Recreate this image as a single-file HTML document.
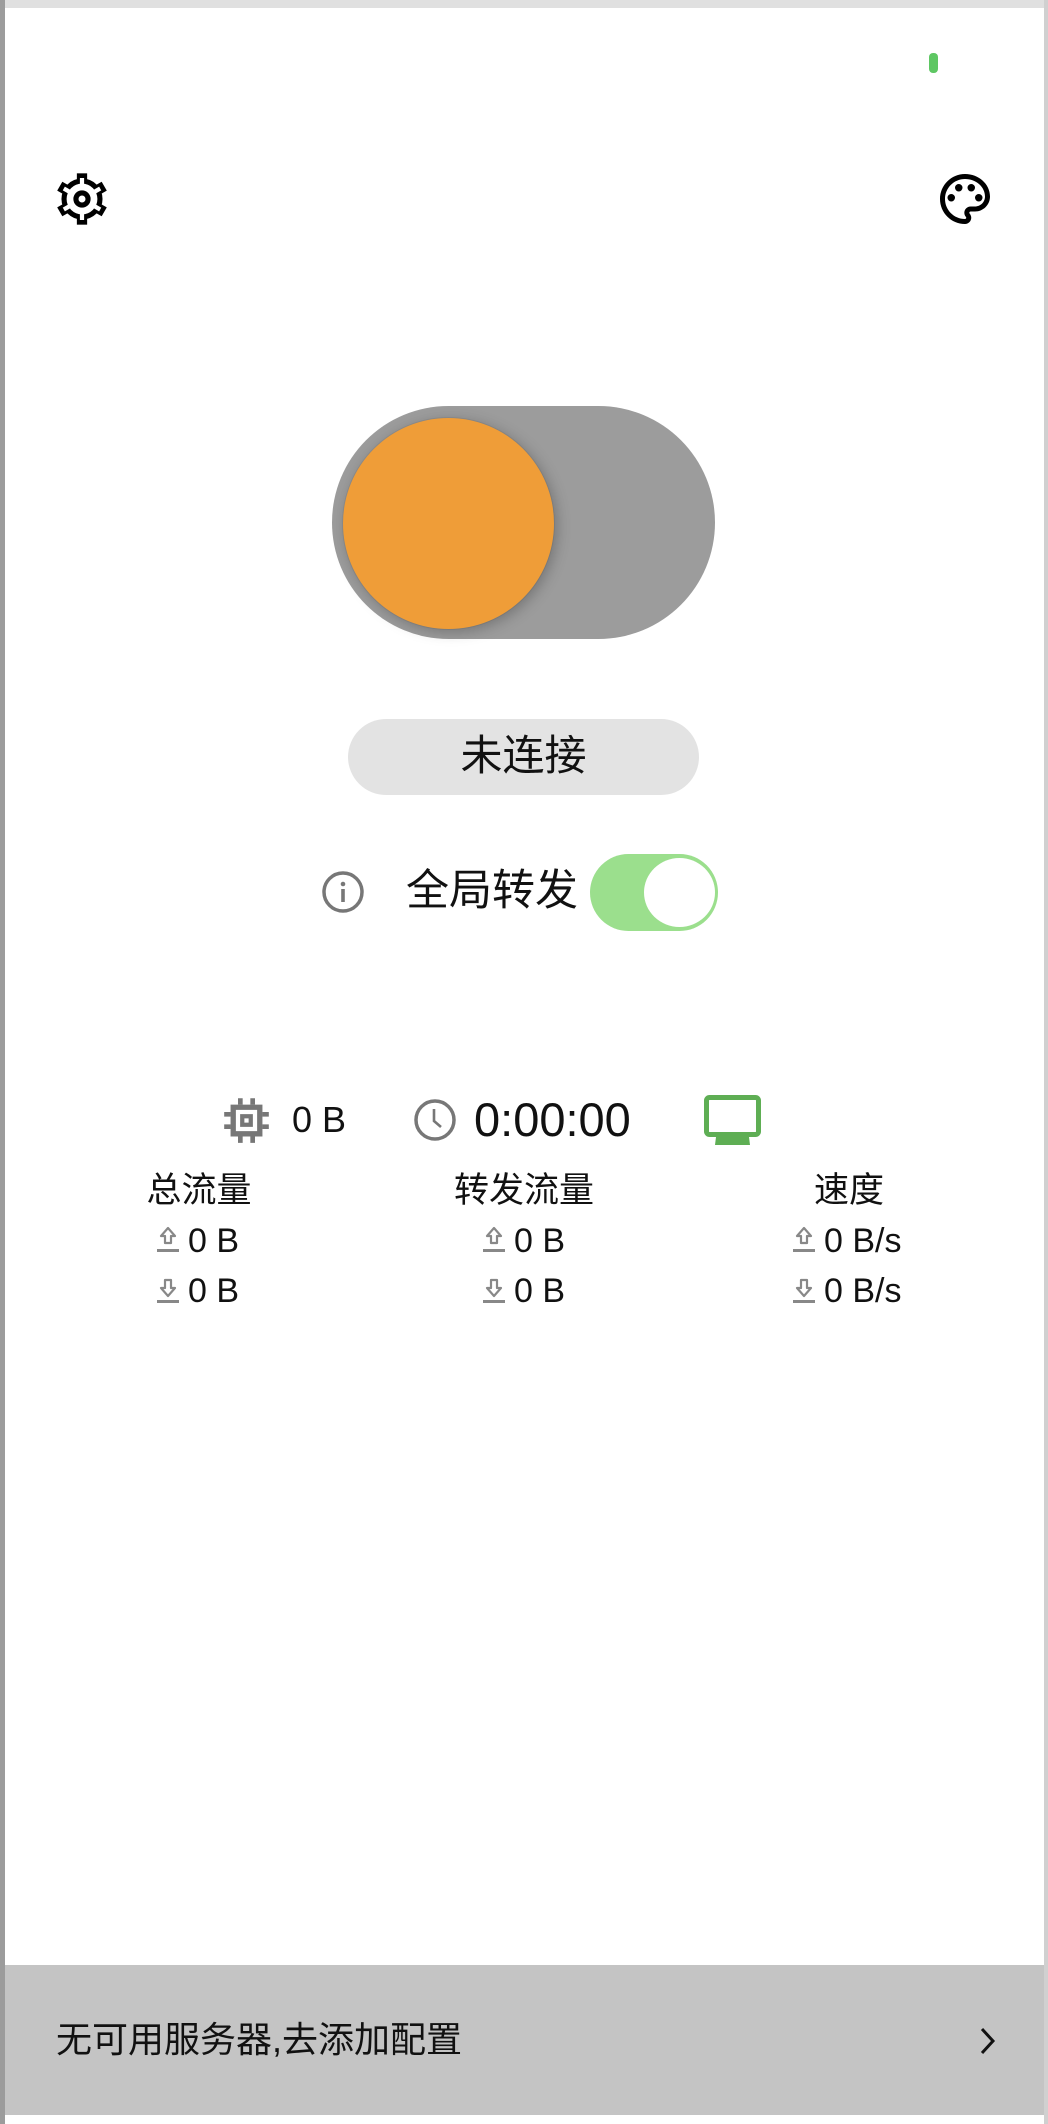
<!DOCTYPE html>
<html><head><meta charset="utf-8"><style>
*{margin:0;padding:0;box-sizing:border-box}
body{width:1048px;height:2124px;background:#fff;position:relative;overflow:hidden;font-family:"Liberation Sans","Noto Sans CJK SC",sans-serif;color:#111}
.a{position:absolute}
.t{position:absolute;white-space:nowrap;line-height:1}
.ar{display:inline-block;width:24px;height:30px;vertical-align:-3px;margin-right:8px}
</style></head><body>
<div class="a" style="left:0;top:0;width:1048px;height:8px;background:#e0e0e0"></div>
<div class="a" style="left:0;top:0;width:5px;height:2124px;background:#9c9c9c"></div>
<div class="a" style="right:0;top:0;width:4px;height:2124px;background:#d0d0d0"></div>
<div class="a" style="left:929px;top:53px;width:9px;height:20px;border-radius:4px;background:#5ec763"></div>

<svg class="a" style="left:54px;top:171px" width="56" height="56" viewBox="0 0 24 24">
<g fill="#000"><circle cx="12" cy="12" r="8.8"/><g id="th"><rect x="9.8" y="1" width="4.4" height="4"/><rect x="9.8" y="19" width="4.4" height="4"/></g><use href="#th" transform="rotate(60 12 12)"/><use href="#th" transform="rotate(120 12 12)"/></g>
<g fill="#fff"><circle cx="12" cy="12" r="6.6"/><g id="th2"><rect x="11.1" y="3" width="1.8" height="3"/><rect x="11.1" y="18" width="1.8" height="3"/></g><use href="#th2" transform="rotate(60 12 12)"/><use href="#th2" transform="rotate(120 12 12)"/></g>
<circle cx="12" cy="12" r="2.6" fill="none" stroke="#000" stroke-width="2.2"/>
</svg>

<svg class="a" style="left:935px;top:169px" width="60" height="60" viewBox="0 0 24 24"><path fill="#000" d="M12 22C6.49 22 2 17.51 2 12S6.49 2 12 2s10 4.04 10 9c0 3.31-2.69 6-6 6h-1.77c-.28 0-.5.22-.5.5 0 .12.05.23.13.33.41.47.64 1.06.64 1.67 0 1.38-1.12 2.5-2.5 2.5zm0-18c-4.41 0-8 3.59-8 8s3.59 8 8 8c.28 0 .5-.22.5-.5 0-.16-.08-.28-.14-.35-.41-.46-.63-1.05-.63-1.65 0-1.38 1.12-2.5 2.5-2.5H16c2.21 0 4-1.79 4-4 0-3.86-3.59-7-8-7z"/><circle cx="6.5" cy="11.5" r="1.5"/><circle cx="9.5" cy="7.5" r="1.5"/><circle cx="14.5" cy="7.5" r="1.5"/><circle cx="17.5" cy="11.5" r="1.5"/></svg>

<div class="a" style="left:332px;top:406px;width:383px;height:233px;border-radius:117px;background:#9c9c9c"></div>
<div class="a" style="left:343px;top:418px;width:211px;height:211px;border-radius:50%;background:#ef9d38;box-shadow:3px 3px 14px rgba(0,0,0,.25),0 0 0 1px rgba(0,0,0,.06)"></div>

<div class="a" style="left:348px;top:719px;width:351px;height:76px;border-radius:38px;background:#e3e3e3"></div>
<div class="t" style="left:348px;width:351px;top:735px;text-align:center;font-size:42px">未连接</div>

<svg class="a" style="left:321px;top:870px" width="44" height="44" viewBox="0 0 44 44"><circle cx="22" cy="22" r="19" fill="none" stroke="#777" stroke-width="3.5"/><circle cx="22" cy="14" r="2.3" fill="#777"/><rect x="20.2" y="19" width="3.6" height="13" fill="#777"/></svg>
<div class="t" style="left:406px;top:870px;font-size:43px">全局转发</div>
<div class="a" style="left:590px;top:854px;width:128px;height:77px;border-radius:39px;background:#9bdf8d"></div>
<div class="a" style="left:644px;top:858px;width:71px;height:69px;border-radius:50%;background:#fff"></div>

<svg class="a" style="left:221px;top:1095px" width="51" height="51" viewBox="0 0 24 24" fill="#777"><path d="M4.5 4.5h15v15h-15z M7 7v10h10V7z M9 9h6v6H9z M11 11v2h2v-2z" fill-rule="evenodd"/><path d="M8 1.5h2.2v3H8zM13.8 1.5H16v3h-2.2zM8 19.5h2.2v3H8zM13.8 19.5H16v3h-2.2zM1.5 8h3v2.2h-3zM1.5 13.8h3V16h-3zM19.5 8h3v2.2h-3zM19.5 13.8h3V16h-3z"/></svg>
<div class="t" style="left:292px;top:1102px;font-size:36px">0 B</div>
<svg class="a" style="left:413px;top:1098px" width="44" height="44" viewBox="0 0 44 44"><circle cx="22" cy="22" r="19" fill="none" stroke="#777" stroke-width="3.5"/><path d="M21 11v12l7 6" fill="none" stroke="#777" stroke-width="2.6"/></svg>
<div class="t" style="left:474px;top:1096px;font-size:47px">0:00:00</div>
<svg class="a" style="left:704px;top:1095px" width="57" height="50" viewBox="0 0 57 50"><rect x="2.5" y="2.5" width="52" height="37" rx="3" fill="none" stroke="#5eae54" stroke-width="5"/><path d="M12 42h33l1 8H11z" fill="#5eae54"/></svg>

<div class="t" style="left:99px;width:200px;top:1173px;text-align:center;font-size:35px">总流量</div>
<div class="t" style="left:424px;width:200px;top:1173px;text-align:center;font-size:35px">转发流量</div>
<div class="t" style="left:749px;width:200px;top:1173px;text-align:center;font-size:35px">速度</div>

<svg width="0" height="0" style="position:absolute"><defs>
<g id="up"><path d="M12 3l-7 8h4v7h6v-7h4z" fill="none" stroke="#888" stroke-width="2.2" stroke-linejoin="round"/><rect x="1" y="24" width="22" height="3" fill="#888"/></g>
<g id="dn"><path d="M12 21l-7-8h4V5h6v8h4z" fill="none" stroke="#888" stroke-width="2.2" stroke-linejoin="round"/><rect x="1" y="25" width="22" height="3" fill="#888"/></g>
</defs></svg>

<div class="t" style="left:156px;top:1224px;font-size:34px"><svg class="ar" viewBox="0 0 24 30"><use href="#up"/></svg>0 B</div>
<div class="t" style="left:156px;top:1274px;font-size:34px"><svg class="ar" viewBox="0 0 24 30"><use href="#dn"/></svg>0 B</div>
<div class="t" style="left:482px;top:1224px;font-size:34px"><svg class="ar" viewBox="0 0 24 30"><use href="#up"/></svg>0 B</div>
<div class="t" style="left:482px;top:1274px;font-size:34px"><svg class="ar" viewBox="0 0 24 30"><use href="#dn"/></svg>0 B</div>
<div class="t" style="left:792px;top:1224px;font-size:34px"><svg class="ar" viewBox="0 0 24 30"><use href="#up"/></svg>0 B/s</div>
<div class="t" style="left:792px;top:1274px;font-size:34px"><svg class="ar" viewBox="0 0 24 30"><use href="#dn"/></svg>0 B/s</div>

<div class="a" style="left:5px;top:1965px;width:1039px;height:150px;background:#c4c4c4"></div>
<div class="t" style="left:56px;top:2022px;font-size:36px">无可用服务器,去添加配置</div>
<svg class="a" style="left:978px;top:2026px" width="20" height="30" viewBox="0 0 20 30"><path d="M4 3l11 12L4 27" fill="none" stroke="#111" stroke-width="3"/></svg>
</body></html>
